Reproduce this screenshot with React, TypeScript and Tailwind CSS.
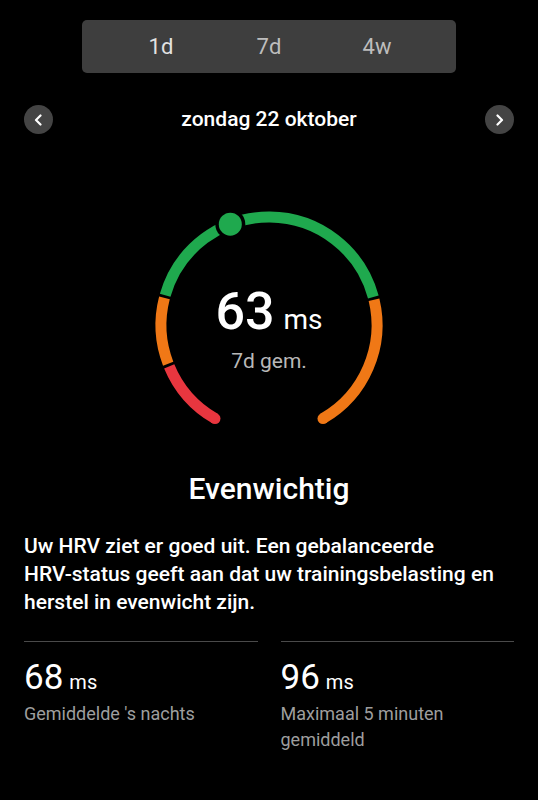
import React from "react";

const CX = 120;
const CY = 120;
const R = 108;

const pt = (deg: number) => {
    const a = (deg * Math.PI) / 180;
    return [CX + R * Math.sin(a), CY - R * Math.cos(a)];
};

const arc = (from: number, to: number) => {
    const [x1, y1] = pt(from);
    const [x2, y2] = pt(to);
    const large = to - from > 180 ? 1 : 0;
    return `M ${x1} ${y1} A ${R} ${R} 0 ${large} 1 ${x2} ${y2}`;
};

const GREEN = "#1fa94e";
const ORANGE = "#f07816";
const RED = "#e8363f";

const Gauge = () => {
    const [sx, sy] = pt(-150);
    const [ex, ey] = pt(150);
    const [dx, dy] = pt(-21);
    return (
        <div className="relative mx-auto mt-[69px] w-[240px] h-[240px]">
            <svg width="240" height="240" viewBox="0 0 240 240">
                <path d={arc(-150, -112.5)} stroke={RED} strokeWidth="11" fill="none" />
                <path d={arc(-111, -75.5)} stroke={ORANGE} strokeWidth="11" fill="none" />
                <path d={arc(-74, 75)} stroke={GREEN} strokeWidth="11" fill="none" />
                <path d={arc(76.5, 150)} stroke={ORANGE} strokeWidth="11" fill="none" />
                <circle cx={sx} cy={sy} r="5.5" fill={RED} />
                <circle cx={ex} cy={ey} r="5.5" fill={ORANGE} />
                <circle cx={dx} cy={dy} r="15" fill="#000" />
                <circle cx={dx} cy={dy} r="11.5" fill={GREEN} />
            </svg>
            <div className="absolute inset-0 flex flex-col items-center justify-center pt-[10px]">
                <div className="flex items-baseline text-white">
                    <span className="text-[52px] leading-[52px] font-medium">63</span>
                    <span className="text-[28px] ml-[9px]">ms</span>
                </div>
                <div className="mt-[8px] text-[21px] leading-[24px] text-[#b8b8b8]">7d gem.</div>
            </div>
        </div>
    );
};

const Chevron = ({ dir }: { dir: "left" | "right" }) => (
    <div className="w-[29px] h-[29px] rounded-full bg-[#444444] flex items-center justify-center">
        <svg width="12" height="12" viewBox="0 0 12 12">
            <polyline
                points={dir === "left" ? "7.5,1.5 3,6 7.5,10.5" : "4.5,1.5 9,6 4.5,10.5"}
                fill="none"
                stroke="#fff"
                strokeWidth="2.2"
                strokeLinecap="round"
                strokeLinejoin="round"
            />
        </svg>
    </div>
);

const Stat = ({ value, label }: { value: string; label: string }) => (
    <div className="flex-1 border-t border-[#4a4a4a]">
        <div className="mt-[16px] flex items-baseline text-white">
            <span className="text-[35px] leading-[40px]">{value}</span>
            <span className="text-[20px] ml-[6px]">ms</span>
        </div>
        <div className="mt-[3px] text-[18px] leading-[26px] text-[#9e9e9e]">{label}</div>
    </div>
);

export default function App() {
    return (
        <div className="w-[538px] h-[800px] bg-black overflow-hidden font-['Roboto',sans-serif] pt-[20px]">
            <div className="mx-auto w-[374px] h-[53px] rounded-[5px] bg-[#3e3e3e] flex justify-center items-center text-[22px]">
                <div className="w-[108px] text-center text-[#e2e2e2]">1d</div>
                <div className="w-[108px] text-center text-[#bdbdbd]">7d</div>
                <div className="w-[108px] text-center text-[#bdbdbd]">4w</div>
            </div>

            <div className="mt-[31px] px-6 flex items-center justify-between">
                <Chevron dir="left" />
                <div className="text-white text-[21px] font-medium">zondag 22 oktober</div>
                <Chevron dir="right" />
            </div>

            <Gauge />

            <div className="mt-[26px] text-center text-white text-[30px] leading-[36px] font-medium">Evenwichtig</div>

            <p className="mt-[25px] px-6 text-white text-[21px] leading-[28px] font-medium">
                Uw HRV ziet er goed uit. Een gebalanceerde <span className="whitespace-nowrap">HRV-status</span> geeft aan dat uw trainingsbelasting en herstel in evenwicht zijn.
            </p>

            <div className="mt-[25px] px-6 flex gap-[23px]">
                <Stat value="68" label="Gemiddelde 's nachts" />
                <Stat value="96" label="Maximaal 5 minuten gemiddeld" />
            </div>
        </div>
    );
}
